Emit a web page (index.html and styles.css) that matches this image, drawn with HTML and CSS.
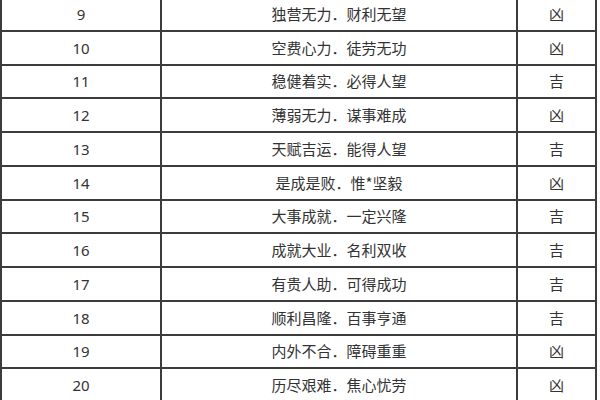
FILE: index.html
```html
<!DOCTYPE html>
<html lang="zh">
<head>
<meta charset="utf-8">
<link rel="stylesheet" href="styles.css">
</head>
<body>
<table class="luck">
<tbody>
<tr><td class="num">9</td><td class="desc">独营无力．财利无望</td><td class="res">凶</td></tr>
<tr><td class="num">10</td><td class="desc">空费心力．徒劳无功</td><td class="res">凶</td></tr>
<tr><td class="num">11</td><td class="desc">稳健着实．必得人望</td><td class="res">吉</td></tr>
<tr><td class="num">12</td><td class="desc">薄弱无力．谋事难成</td><td class="res">凶</td></tr>
<tr><td class="num">13</td><td class="desc">天赋吉运．能得人望</td><td class="res">吉</td></tr>
<tr><td class="num">14</td><td class="desc">是成是败．惟*坚毅</td><td class="res">凶</td></tr>
<tr><td class="num">15</td><td class="desc">大事成就．一定兴隆</td><td class="res">吉</td></tr>
<tr><td class="num">16</td><td class="desc">成就大业．名利双收</td><td class="res">吉</td></tr>
<tr><td class="num">17</td><td class="desc">有贵人助．可得成功</td><td class="res">吉</td></tr>
<tr><td class="num">18</td><td class="desc">顺利昌隆．百事亨通</td><td class="res">吉</td></tr>
<tr><td class="num">19</td><td class="desc">内外不合．障碍重重</td><td class="res">凶</td></tr>
<tr><td class="num">20</td><td class="desc">历尽艰难．焦心忧劳</td><td class="res">凶</td></tr>
</tbody>
</table>
</body>
</html>
```
FILE: styles.css
```css
html, body {
  margin: 0;
  padding: 0;
  background: #ffffff;
}
body {
  width: 600px;
  height: 400px;
  overflow: hidden;
}
.luck {
  border-collapse: collapse;
  margin-top: -4px;
  margin-left: 0;
  width: 595px;
  font-family: "Noto Sans CJK SC", "Noto Sans", sans-serif;
  font-size: 15px;
  color: #333333;
  table-layout: fixed;
}
.luck td {
  border: 2px solid #3c3c3c;
  height: 31.75px;
  padding: 0;
  text-align: center;
  vertical-align: middle;
  line-height: 20px;
}
.luck .num {
  width: 158px;
  font-family: "Noto Sans", "Open Sans", sans-serif;
}
.luck .desc {
  width: 354px;
}
.luck .res {
  width: 77px;
}
```
